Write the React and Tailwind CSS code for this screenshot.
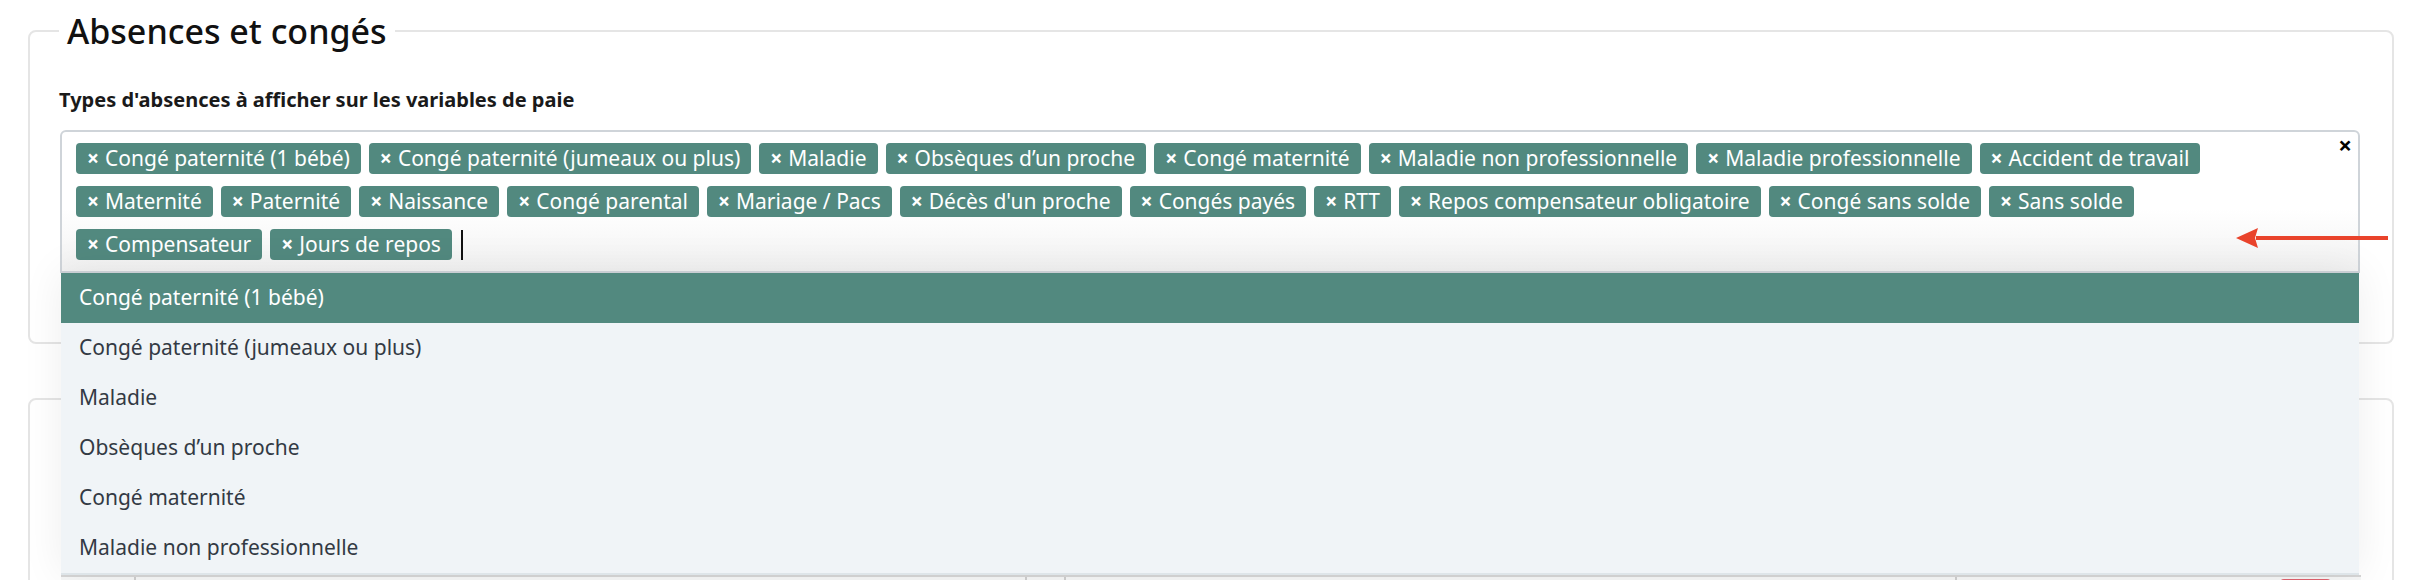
const selected = [
  "Congé paternité (1 bébé)",
  "Congé paternité (jumeaux ou plus)",
  "Maladie",
  "Obsèques d’un proche",
  "Congé maternité",
  "Maladie non professionnelle",
  "Maladie professionnelle",
  "Accident de travail",
  "Maternité",
  "Paternité",
  "Naissance",
  "Congé parental",
  "Mariage / Pacs",
  "Décès d'un proche",
  "Congés payés",
  "RTT",
  "Repos compensateur obligatoire",
  "Congé sans solde",
  "Sans solde",
  "Compensateur",
  "Jours de repos",
];

const options = [
  "Congé paternité (1 bébé)",
  "Congé paternité (jumeaux ou plus)",
  "Maladie",
  "Obsèques d’un proche",
  "Congé maternité",
  "Maladie non professionnelle",
];

function Chip({ label }) {
  return (
    <span className="flex h-[31px] items-center rounded-[4px] bg-[#52897f] px-[11px] text-[21px] leading-none text-white">
      <span className="mr-[6px] font-bold">×</span>
      {label}
    </span>
  );
}

export default function App() {
  return (
    <div
      className="relative h-[580px] overflow-hidden bg-white px-[28px] pt-[10px] text-[#1a1a1a]"
      style={{ fontFamily: '"Noto Sans", sans-serif' }}
    >
      <fieldset className="rounded-lg border-2 border-[#e5e5e5] px-[29px] pb-[69px]">
        <legend className="px-2 text-[34px] font-medium leading-[42px] text-[#111]">Absences et congés</legend>

        <div className="mt-[34px] text-[20px] font-bold leading-[28px]">
          Types d'absences à afficher sur les variables de paie
        </div>

        <div className="relative mt-[16px] ml-px mr-[3px]">
          <div className="rounded-t-md border-2 border-[#cfd4d9] bg-gradient-to-b from-white from-55% to-[#f2f2f2] py-[11px] pl-[14px] pr-[40px]">
            <div className="flex flex-wrap items-center gap-x-[8px] gap-y-[12px]">
              {selected.map((s) => (
                <Chip key={s} label={s} />
              ))}
              <span className="ml-px h-[30px] w-[2px] bg-[#111]" />
            </div>
          </div>
          <button className="absolute right-[8px] top-[3px] text-[24px] font-bold leading-none text-black">×</button>

          <ul className="absolute left-px right-px top-[calc(100%-2px)] z-10 border-y-2 border-t-[#c9ced3] border-b-[#dee5e9] bg-[#f0f4f7] text-[21px] text-[#333a44] shadow-[0_0_40px_rgba(0,0,0,0.07)]">
            {options.map((o, i) => (
              <li
                key={o}
                className={
                  i === 0
                    ? "flex h-[50px] items-center bg-[#52897f] pl-[18px] text-white"
                    : "flex h-[50px] items-center pl-[18px]"
                }
              >
                {o}
              </li>
            ))}
          </ul>
        </div>
      </fieldset>

      <div className="mt-[54px] rounded-lg border-2 border-[#e5e5e5]">
        {/* table header and first rows sit under the open dropdown */}
        <div className="h-[175px]" />
        <div className="mx-[31px] grid h-[48px] grid-cols-[75px_891px_39px_891px_1fr] border-t-2 border-[#d6d6d6] bg-[#f6f7f7]">
          <div className="border-r-2 border-[#cfcfcf]" />
          <div className="border-r-2 border-[#cfcfcf]" />
          <div className="border-r-2 border-[#cfcfcf]" />
          <div className="flex justify-end border-r-2 border-[#cfcfcf] pr-[14px] pt-[4px]">
            <svg width="14" height="10" viewBox="0 0 14 10" fill="none" stroke="#111" strokeWidth="2.5">
              <path d="M2 2l5 5 5-5" />
            </svg>
          </div>
          <div className="flex justify-end pr-[30px] pt-[2px]">
            <span className="flex h-[40px] w-[51px] items-start justify-center rounded-[4px] bg-[#e0626f] pt-[2px]">
              <svg width="14" height="16" viewBox="0 0 14 16" fill="none" stroke="#fff" strokeWidth="1.5">
                <path d="M1 3h12M5 3V1h4v2M2.5 3l1 12h7l1-12" />
              </svg>
            </span>
          </div>
        </div>
      </div>

      <svg
        className="absolute left-[2234px] top-[226px] z-20"
        width="156"
        height="24"
        viewBox="0 0 156 24"
      >
        <path d="M22 12H154" stroke="#e9432b" strokeWidth="4" />
        <path d="M2 12L24 2L21 12L24 22Z" fill="#e9432b" />
      </svg>
    </div>
  );
}
